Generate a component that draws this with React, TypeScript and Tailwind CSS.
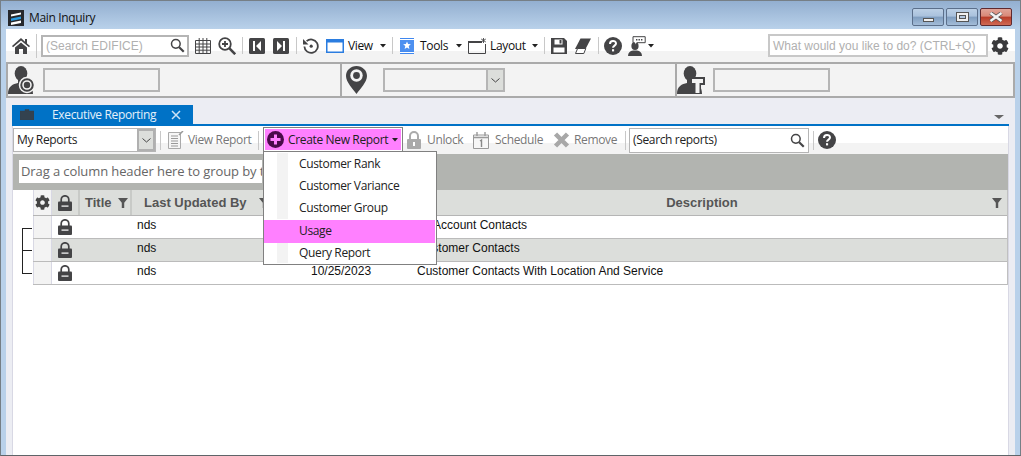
import React from "react";
import { FaCog } from "react-icons/fa";

const D = "#444446";
const UI = "font-['Open_Sans',sans-serif] text-[12px] tracking-[-0.35px]";
const AR = "font-['Liberation_Sans',sans-serif] text-[12px]";

function Sep({ ml, h = "h-[24px]" }: { ml: string; h?: string }) {
  return <div className={`w-px ${h} bg-[#c8c8c8] shrink-0 ${ml}`} />;
}
function Caret({ ml, color = "#222" }: { ml: string; color?: string }) {
  return (
    <svg width="6" height="4" viewBox="0 0 6 4" className={`shrink-0 ${ml}`}>
      <path d="M0 0h6L3 3.500z" fill={color} />
    </svg>
  );
}
function Magnifier({ s = 18 }: { s?: number }) {
  return (
    <svg width={s} height={s} viewBox="0 0 18 18" className="shrink-0">
      <circle cx="7" cy="7" r="5.200" fill="none" stroke={D} strokeWidth="1.800" />
      <path d="M11 11l5.500 5.500" stroke={D} strokeWidth="2.600" />
    </svg>
  );
}
function Help({ s = 18, ml }: { s?: number; ml: string }) {
  return (
    <svg width={s} height={s} viewBox="0 0 18 18" className={`shrink-0 ${ml}`}>
      <circle cx="9" cy="9" r="9" fill={D} />
      <path d="M6 7c0-4 6-4 6-.4 0 2-3 2-3 4.200" fill="none" stroke="#fff" strokeWidth="2" />
      <rect x="8" y="12.200" width="2.100" height="2.200" fill="#fff" />
    </svg>
  );
}
function Lock({ cls = "" }: { cls?: string }) {
  return (
    <svg width="14" height="16" viewBox="0 0 14 16" className={`shrink-0 ${cls}`}>
      <path d="M3.200 7V4.600a3.800 3.800 0 0 1 7.600 0V7" fill="none" stroke={D} strokeWidth="1.700" />
      <rect x="0" y="6.500" width="14" height="9.500" rx="1" fill={D} />
      <rect x="3.500" y="10.500" width="7" height="1.200" fill="#fff" />
    </svg>
  );
}
function Filter({ cls = "" }: { cls?: string }) {
  return (
    <svg width="10" height="10" viewBox="0 0 9 9" className={`shrink-0 ${cls}`}>
      <path d="M0 0h9L5.600 4.200V9H3.400V4.200z" fill="#555" />
    </svg>
  );
}
function Chevron() {
  return (
    <svg width="9" height="5" viewBox="0 0 9 5">
      <path d="M.5.500l4 3.500 4-3.500" fill="none" stroke="#444" />
    </svg>
  );
}
function Person({ children }: { children?: React.ReactNode }) {
  return (
    <svg width="28" height="28" viewBox="0 0 28 28" className="shrink-0">
      <ellipse cx="13" cy="7.500" rx="6.300" ry="7.500" fill={D} />
      <path d="M10 14h6v3c5 1 9 3 9 11H0c0-8 5-10 10-11z" fill={D} />
      {children}
    </svg>
  );
}

function TitleBtn({ kind }: { kind: "min" | "max" | "close" }) {
  const bg =
    kind === "close"
      ? "bg-[linear-gradient(#e0a498_0,#d98878_45%,#b93c28_50%,#cf6a55_100%)] border-[#5f2a2f]"
      : "bg-[linear-gradient(#bcd0e6_0,#a9c1dc_45%,#7f9dbf_50%,#a3bcd8_100%)] border-[#5b6f8b]";
  return (
    <div className={`w-[32px] h-[18px] border rounded-[2px] flex items-center justify-center ${bg}`}>
      {kind === "min" && <div className="w-[11px] h-[4px] bg-[#f0f0f0] border border-[#555] mt-[6px]" />}
      {kind === "max" && (
        <div className="w-[13px] h-[10px] bg-[#f0f0f0] border border-[#555] flex items-center justify-center">
          <div className="w-[7px] h-[4px] bg-[#b4c8e0] border border-[#555]" />
        </div>
      )}
      {kind === "close" && (
        <svg width="16" height="10" viewBox="0 0 16 10">
          <path d="M2.500 1l11 8M13.500 1l-11 8" stroke="#555" strokeWidth="4" />
          <path d="M2.500 1l11 8M13.500 1l-11 8" stroke="#f4f4f4" strokeWidth="2.400" />
        </svg>
      )}
    </div>
  );
}

function TopToolbar() {
  const t = `${UI} text-[#111] shrink-0 whitespace-nowrap`;
  return (
    <div className="h-[33px] flex items-center shrink-0 bg-[linear-gradient(#fff_0,#fff_22px,#f3f3f3_22px)]">
      <svg width="18" height="16" viewBox="0 0 18 16" className="ml-[6px] shrink-0">
        <path d="M9 0L0 8l1 1.200L9 2.600l8 6.600L18 8l-3-2.600V1h-2v2.700z" fill={D} />
        <path d="M3 9.500L9 4.500l6 5V16h-4v-5H7v5H3z" fill={D} />
      </svg>
      <Sep ml="ml-[6px]" />
      <div className={`ml-[4px] w-[148px] h-[22px] border-2 border-[#b5b5b5] bg-white flex items-center pl-[3px] pr-[2px] justify-between ${AR} text-[#b0b0b0]`}>
        <span>(Search EDIFICE)</span>
        <Magnifier s={15} />
      </div>
      <svg width="16" height="16" viewBox="0 0 16 16" className="ml-[6px] shrink-0">
        <path d="M.5 2.500h15v13H.5zM.5 6h15M.5 9h15M.5 12.200h15M4.200 0v15.500M8 0v15.500M11.800 0v15.500" fill="none" stroke={D} />
      </svg>
      <svg width="18" height="18" viewBox="0 0 18 18" className="ml-[7px] shrink-0">
        <circle cx="7" cy="7" r="5.800" fill="none" stroke={D} strokeWidth="1.800" />
        <path d="M11.200 11.200l6 6" stroke={D} strokeWidth="2.600" />
        <path d="M4 7h6M7 4v6" stroke={D} strokeWidth="1.800" />
      </svg>
      <Sep ml="ml-[6px]" h="h-[17px]" />
      <svg width="16" height="16" viewBox="0 0 16 16" className="ml-[6px] shrink-0">
        <rect width="16" height="16" rx="1.500" fill={D} />
        <path d="M4 3h2v10H4zM12 3v10L7 8z" fill="#fff" />
      </svg>
      <svg width="16" height="16" viewBox="0 0 16 16" className="ml-[8px] shrink-0">
        <rect width="16" height="16" rx="1.500" fill={D} />
        <path d="M12 3h-2v10h2zM4 3v10l5-5z" fill="#fff" />
      </svg>
      <Sep ml="ml-[7px]" h="h-[17px]" />
      <svg width="16" height="16" viewBox="0 0 16 16" className="ml-[6px] shrink-0">
        <path d="M3.600 3.200A6.700 6.700 0 1 1 1.400 8.500" fill="none" stroke={D} strokeWidth="1.800" />
        <path d="M0 1v5.500h5.500z" fill={D} />
        <circle cx="8.200" cy="8.200" r="1.600" fill={D} />
      </svg>
      <svg width="18" height="14" viewBox="0 0 18 14" className="ml-[7px] shrink-0">
        <rect x=".75" y=".75" width="16.500" height="12.500" fill="#fff" stroke="#2b7de0" strokeWidth="1.500" />
        <rect x="1" y="1" width="16" height="2.500" fill="#2b7de0" />
      </svg>
      <span className={`${t} ml-[4px] w-[26px]`}>View</span>
      <Caret ml="ml-[6px]" />
      <Sep ml="ml-[6px]" h="h-[17px]" />
      <svg width="14" height="16" viewBox="0 0 14 16" className="ml-[7px] shrink-0">
        <rect width="14" height="16" fill="#3f87ef" />
        <rect y="2" width="14" height="11.500" fill="#4d90f0" />
        <rect y="14" width="14" height="1" fill="#fff" />
        <rect y="1" width="14" height="1" fill="#fff" />
        <path d="M7 3.500l1.100 2.600 2.800.2-2.200 1.800.7 2.800L7 9.400l-2.400 1.500.7-2.800-2.200-1.800 2.800-.2z" fill="#fff" />
      </svg>
      <span className={`${t} ml-[6px] w-[29px]`}>Tools</span>
      <Caret ml="ml-[7px]" />
      <svg width="18" height="16" viewBox="0 0 18 16" className="ml-[6px] shrink-0">
        <path d="M.5 3.500h13M.5 3.500v12h17V6" fill="none" stroke={D} />
        <rect x="0" y="3" width="14" height="2" fill={D} />
        <path d="M15.500 0v5M13.200 1l4.600 3M17.800 1l-4.600 3" stroke={D} strokeWidth=".9" />
      </svg>
      <span className={`${t} ml-[4px] w-[36px]`}>Layout</span>
      <Caret ml="ml-[6px]" />
      <Sep ml="ml-[6px]" h="h-[17px]" />
      <svg width="16" height="16" viewBox="0 0 16 16" className="ml-[6px] shrink-0">
        <path d="M0 0h13l3 3v13H0z" fill={D} />
        <rect x="3.500" y="1.500" width="8" height="5" fill="#fff" />
        <rect x="8.500" y="2" width="2" height="3.500" fill={D} />
        <rect x="2.500" y="9.500" width="11" height="5" fill="#fff" />
      </svg>
      <svg width="16" height="16" viewBox="0 0 16 16" className="ml-[8px] shrink-0">
        <path d="M5.500 0.500H16L10.500 11H0z" fill={D} />
        <path d="M2.600 10.500L.5 15.500h8.300l2-5z" fill="#fff" stroke={D} />
      </svg>
      <Sep ml="ml-[7px]" h="h-[17px]" />
      <Help ml="ml-[5px]" />
      <svg width="18" height="20" viewBox="0 0 18 20" className="ml-[6px] shrink-0">
        <ellipse cx="7" cy="10" rx="3.600" ry="4" fill={D} />
        <path d="M0 20c0-3 2-5 5-5.400h4c3 .4 5 2.400 5 5.400z" fill={D} />
        <path d="M5 .7h12.200v6H9L6.500 9V6.700H5z" fill="#fff" stroke={D} />
        <path d="M8 3.700h1.400M10.500 3.700h1.400M13 3.700h1.400" stroke={D} strokeWidth="1.400" />
      </svg>
      <Caret ml="ml-[2px]" />
      <div className={`ml-auto w-[220px] h-[23px] border-2 border-[#c8c8c8] bg-white flex items-center pl-[3px] ${AR} text-[#b0b0b0] whitespace-nowrap`}>
        What would you like to do? (CTRL+Q)
      </div>
      <FaCog className="ml-[3px] mr-[6px] shrink-0 text-[#3a3a3c]" size={18} />
    </div>
  );
}

function InfoRow() {
  const box = "h-[24px] border-2 border-[#b5b5b5] bg-[#f3f3f3] shrink-0";
  return (
    <div className="h-[36px] shrink-0 flex border-y-2 border-[#aaaaaa] bg-[#f3f3f3]">
      <div className="w-[336px] shrink-0 border-l-2 border-r-2 border-[#aaaaaa] flex items-center">
        <Person>
          <circle cx="19" cy="19" r="7.500" fill={D} stroke="#f3f3f3" strokeWidth="1.500" />
          <circle cx="19" cy="19" r="4" fill="none" stroke="#f3f3f3" strokeWidth="1.600" />
        </Person>
        <div className={`${box} ml-[7px] w-[117px]`} />
      </div>
      <div className="w-[335px] shrink-0 border-r-2 border-[#aaaaaa] flex items-center">
        <svg width="21" height="28" viewBox="0 0 21 28" className="ml-[4px] shrink-0">
          <path d="M10.500 0C4.700 0 0 4.400 0 10c0 6 7 13 10.500 18C14 23 21 16 21 10 21 4.400 16.300 0 10.500 0z" fill={D} />
          <circle cx="10.500" cy="9.500" r="6.200" fill="#f3f3f3" />
          <circle cx="10.500" cy="9.500" r="3.400" fill={D} />
        </svg>
        <div className={`${box} ml-[16px] w-[122px] flex justify-end`}>
          <div className="w-[17px] h-full bg-[#dcdedb] border-l-2 border-[#b5b5b5] flex items-center justify-center">
            <Chevron />
          </div>
        </div>
      </div>
      <div className="flex-1 border-r-2 border-[#aaaaaa] flex items-center">
        <Person>
          <path d="M13 11h15v8h-4v9h-7v-9h-4z" fill={D} />
          <path d="M15 13h11v4h-3.500v10h-4V17H15z" fill="#f3f3f3" />
        </Person>
        <div className={`${box} ml-[8px] w-[117px]`} />
      </div>
    </div>
  );
}

function ReportToolbar() {
  const dis = `${UI} text-[#777] shrink-0 whitespace-nowrap`;
  const items = ["Customer Rank", "Customer Variance", "Customer Group", "Usage", "Query Report"];
  return (
    <div className="h-[28px] shrink-0 flex items-center bg-[linear-gradient(#fff_0,#fff_17px,#f3f3f3_17px)]">
      <div className="w-[143px] h-[24px] border border-[#b5b5b5] bg-white flex items-center justify-between shrink-0">
        <span className={`${UI} text-[#222] pl-[3px]`}>My Reports</span>
        <div className="w-[18px] h-full bg-[#dcdedb] border-2 border-[#b0b0b0] flex items-center justify-center">
          <Chevron />
        </div>
      </div>
      <Sep ml="ml-[4px]" h="h-[19px]" />
      <svg width="16" height="18" viewBox="0 0 16 18" className="ml-[7px] shrink-0">
        <path d="M.5 1.500h12v16H.5z" fill="#f6f6f6" stroke="#aaa" />
        <path d="M3 5h7M3 7.500h7M3 10h7M3 12.500h7M3 15h7" stroke="#999" />
        <path d="M11 4l4-4" stroke="#999" strokeWidth="1.500" />
      </svg>
      <span className={`${dis} ml-[4px] w-[63px]`}>View Report</span>
      <Sep ml="ml-[7px]" h="h-[19px]" />
      <div className="relative ml-[4px] w-[140px] h-[24px] mt-[1px] border-t border-x border-[#808080] bg-white shrink-0 px-[1px] pt-[1px] self-start z-10">
        <div className="h-[21px] bg-[#ff80ff] flex items-center">
          <svg width="17" height="17" viewBox="0 0 17 17" className="ml-[2px] shrink-0">
            <circle cx="8.500" cy="8.500" r="8.500" fill="#4a0a4a" />
            <path d="M8.500 3.500v10M3.500 8.500h10" stroke="#ff80ff" strokeWidth="3" />
          </svg>
          <span className={`${UI} text-[#222] ml-[4px] w-[99px] whitespace-nowrap`}>Create New Report</span>
          <Caret ml="ml-[5px]" />
        </div>
        <div className="absolute left-[-1px] top-[23px] w-[174px] h-[114px] border border-[#808080] bg-white pt-[1px]">
          {items.map((it) => (
            <div
              key={it}
              className={`flex items-stretch mr-px ${it === "Usage" ? "bg-[#ff80ff] h-[23px] mt-px" : it === "Query Report" ? "h-[20px]" : "h-[22px]"}`}
            >
              <div className={`ml-[13px] w-[11px] ${it === "Usage" ? "" : "bg-[#f3f3f3]"}`} />
              <span className={`${UI} text-[#222] ml-[11px] flex items-center ${it === "Usage" ? "pb-[2px]" : it === "Query Report" ? "pb-[1px]" : ""}`}>{it}</span>
            </div>
          ))}
        </div>
      </div>
      <svg width="14" height="18" viewBox="0 0 14 18" className="ml-[4px] shrink-0">
        <path d="M3 9V5a4 4 0 0 1 8 0v4" fill="none" stroke="#aaa" strokeWidth="2" />
        <rect y="8" width="14" height="10" rx="1" fill="#aaa" />
        <rect x="6" y="11" width="2" height="4" fill="#fff" />
      </svg>
      <span className={`${dis} ml-[6px] w-[37px]`}>Unlock</span>
      <svg width="16" height="17" viewBox="0 0 16 17" className="ml-[9px] shrink-0">
        <path d="M.5 3h15v13.500H.5z" fill="#f6f6f6" stroke="#999" />
        <path d="M.5 5.500h15M4 0v4M12 0v4" stroke="#999" strokeWidth="1.400" />
        <path d="M7 9l1.500-1v7" fill="none" stroke="#888" strokeWidth="1.400" />
      </svg>
      <span className={`${dis} ml-[6px] w-[48px]`}>Schedule</span>
      <svg width="17" height="16" viewBox="0 0 17 16" className="ml-[10px] shrink-0">
        <path d="M2.500 2l12 12M14.500 2l-12 12" stroke="#a8a8a8" strokeWidth="4.500" />
      </svg>
      <span className={`${dis} ml-[4px] w-[43px]`}>Remove</span>
      <Sep ml="ml-[8px]" h="h-[19px]" />
      <div className="ml-[3px] w-[180px] h-[25px] border border-[#b5b5b5] bg-white flex items-center justify-between pr-[3px] shrink-0">
        <span className={`${UI} text-[#222] pl-[3px]`}>(Search reports)</span>
        <Magnifier s={15} />
      </div>
      <Sep ml="ml-[4px]" h="h-[19px]" />
      <Help ml="ml-[4px]" />
    </div>
  );
}

const cols = "grid grid-cols-[19px_28px_52px_173px_107px_1fr]";
const rows = [
  { d: "All Account Contacts", alt: false, date: "" },
  { d: "Customer Contacts", alt: true, date: "" },
  { d: "Customer Contacts With Location And Service", alt: false, date: "10/25/2023" },
];
function Grid() {
  const hd = "font-['Liberation_Sans',sans-serif] text-[13px] font-bold text-[#555]";
  const hc = "bg-[#dcdedb] border-r-2 border-[#c8cac7] flex items-center";
  return (
    <div className="flex">
      <div className="w-[20px] shrink-0 flex justify-end">
        <svg width="11" height="46" viewBox="0 0 11 46" className="mt-[38px] shrink-0">
          <path d="M.5 0v45.500M0 .5h10M0 22.500h10M0 45.500h10" fill="none" stroke="#222" />
        </svg>
      </div>
      <div className="flex-1 border-r border-[#c0c0c0]">
        <div className={`${cols} h-[26px] border-b border-[#b5b5b5]`}>
          <div className="bg-[#f3f3f3] flex items-center justify-center border-x border-[#d8d8e4] pr-[1px]">
            <FaCog size={15} className="text-[#444]" />
          </div>
          <div className={`${hc} justify-center pr-[1px]`}><Lock /></div>
          <div className={`${hc} pl-[5px]`}>
            <span className={hd}>Title</span>
            <Filter cls="ml-[6px]" />
          </div>
          <div className={`${hc} pl-[12px]`}>
            <span className={hd}>Last Updated By</span>
            <Filter cls="ml-[12px]" />
          </div>
          <div className={hc} />
          <div className="bg-[#dcdedb] flex items-center">
            <span className={`${hd} flex-1 text-center`}>Description</span>
            <Filter cls="mr-[5px]" />
          </div>
        </div>
        {rows.map((r) => (
          <div key={r.d} className={`${cols} h-[23px] border-b border-[#bbbbbb] ${AR} text-[#111] ${r.alt ? "bg-[#dcdedb]" : "bg-white"}`}>
            <div className="bg-[#f3f3f3] border-x border-[#d8d8e4]" />
            <div className="flex justify-center pt-[3px] pr-[3px]"><Lock /></div>
            <div />
            <div className="pl-[5px]">nds</div>
            <div className="pl-[6px]">{r.date}</div>
            <div className="pl-[5px]">{r.d}</div>
          </div>
        ))}
      </div>
    </div>
  );
}

export default function App() {
  return (
    <div className="w-[1021px] h-[456px] overflow-hidden flex flex-col bg-[#b9d1ea] border border-[#767f86] border-b-[#5f6468]">
      <div className="h-[28px] shrink-0 flex items-center bg-[linear-gradient(#93afd0,#b9d1ea)]">
        <svg width="16" height="16" viewBox="0 0 16 16" className="ml-[7px] mt-[6px] shrink-0">
          <rect width="16" height="16" fill="#26282c" />
          <path d="M3 4.500L13 2.500v2L3 6.500z" fill="#fff" />
          <path d="M3 8.500L13 6.500v2.500L3 11z" fill="#2b9be0" />
          <path d="M3 12.500L13 10.500v2.500L3 15z" fill="#fff" />
        </svg>
        <span className={`${UI} text-[#111] ml-[5px] mt-[6px]`}>Main Inquiry</span>
        <div className="ml-auto flex gap-[2px] mr-[8px] mt-[4px]">
          <TitleBtn kind="min" />
          <TitleBtn kind="max" />
          <TitleBtn kind="close" />
        </div>
      </div>
      <div className="flex-1 mx-[5px] flex flex-col bg-[#ecedf3] min-h-0">
        <TopToolbar />
        <InfoRow />
        <div className="h-[28px] shrink-0 px-[6px]">
          <div className="h-full flex items-end border-b-2 border-[#0072c6]">
            <div className="w-[181px] h-[19px] bg-[#0072c6] flex items-center shrink-0">
              <svg width="14" height="11" viewBox="0 0 14 11" className="ml-[8px] shrink-0">
                <path d="M0 2h14v9H0zM5 2V.5h4V2" fill="#33424f" stroke="#33424f" strokeWidth=".5" />
              </svg>
              <span className={`${UI} text-white/90 ml-[18px] w-[105px] whitespace-nowrap`}>Executive Reporting</span>
              <svg width="10" height="10" viewBox="0 0 10 10" className="ml-[14px] shrink-0">
                <path d="M1 1l8 8M9 1l-8 8" stroke="#cfe3f5" strokeWidth="1.500" />
              </svg>
            </div>
            <svg width="10" height="4" viewBox="0 0 10 4" className="ml-auto mr-[5px] mb-[5px] shrink-0">
              <path d="M0 0h10L5 4z" fill="#666" />
            </svg>
          </div>
        </div>
        <div className="flex-1 min-h-0 mx-[6px] bg-white border-x border-[#d8d8e4] flex flex-col">
          <ReportToolbar />
          <div className="h-[36px] shrink-0 bg-[#b2b4b0] pl-[6px] pt-[6px]">
            <div className="w-[243px] h-[23px] bg-white flex items-center pl-[2px] font-['Open_Sans',sans-serif] text-[13px] tracking-[-0.1px] text-[#666] whitespace-nowrap overflow-hidden">
              Drag a column header here to group by t
            </div>
          </div>
          <Grid />
        </div>
      </div>
    </div>
  );
}
